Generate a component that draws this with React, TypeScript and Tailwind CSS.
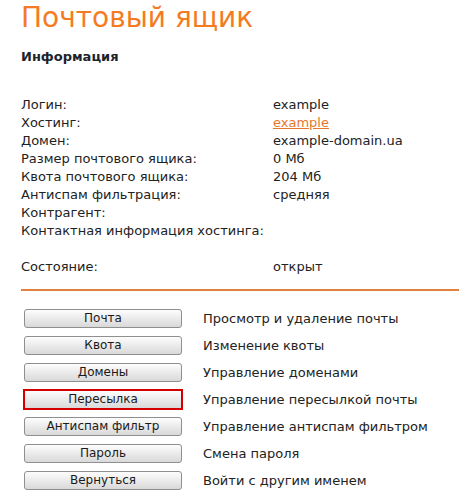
import React from "react";

const INFO: { label: string; value?: string; link?: boolean }[] = [
  { label: "Логин:", value: "example" },
  { label: "Хостинг:", value: "example", link: true },
  { label: "Домен:", value: "example-domain.ua" },
  { label: "Размер почтового ящика:", value: "0 Мб" },
  { label: "Квота почтового ящика:", value: "204 Мб" },
  { label: "Антиспам фильтрация:", value: "средняя" },
  { label: "Контрагент:" },
  { label: "Контактная информация хостинга:" },
  { label: "" },
  { label: "Состояние:", value: "открыт" },
];

const ACTIONS = [
  { name: "Почта", desc: "Просмотр и удаление почты" },
  { name: "Квота", desc: "Изменение квоты" },
  { name: "Домены", desc: "Управление доменами" },
  { name: "Пересылка", desc: "Управление пересылкой почты", focused: true },
  { name: "Антиспам фильтр", desc: "Управление антиспам фильтром" },
  { name: "Пароль", desc: "Смена пароля" },
  { name: "Вернуться", desc: "Войти с другим именем" },
];

export default function App() {
  return (
    <div className="min-h-screen bg-white font-['DejaVu_Sans',sans-serif] text-[13px] leading-[18px] text-[#222]">
      <div className="pl-[21px] pr-[15px]">
        <h1 className="mt-[1px] text-[28px] leading-[34px] font-normal text-[#f47b22]">Почтовый ящик</h1>
        <h2 className="mt-[13px] text-[13px] leading-[18px] font-bold text-[#1c232b]">Информация</h2>

        <div className="mt-[30px] grid grid-cols-[252px_1fr]">
          {INFO.map((row, i) => (
            <React.Fragment key={i}>
              <div className="h-[18px]">{row.label}</div>
              <div className="h-[18px]">
                {row.link ? (
                  <a href="#" className="text-[#e8772e] underline">
                    {row.value}
                  </a>
                ) : (
                  row.value
                )}
              </div>
            </React.Fragment>
          ))}
        </div>

        <div className="mt-[13px] h-[2px] bg-[#e3823f]" />

        <div className="mt-[18px] flex flex-col gap-[8px]">
          {ACTIONS.map((a) => (
            <div key={a.name} className="flex h-[19px] items-center">
              <button
                className={
                  "ml-[3px] h-[19px] w-[158px] border border-[#8f8f8f] bg-gradient-to-b from-[#fdfdfd] to-[#d9d9d9] text-[12px] leading-[17px] text-[#1a1a1a] " +
                  (a.focused ? "rounded-none outline-2 outline-[#d40000] outline-offset-[-1px]" : "rounded-[3px]")
                }
              >
                {a.name}
              </button>
              <span className="ml-[21px]">{a.desc}</span>
            </div>
          ))}
        </div>
      </div>
    </div>
  );
}
